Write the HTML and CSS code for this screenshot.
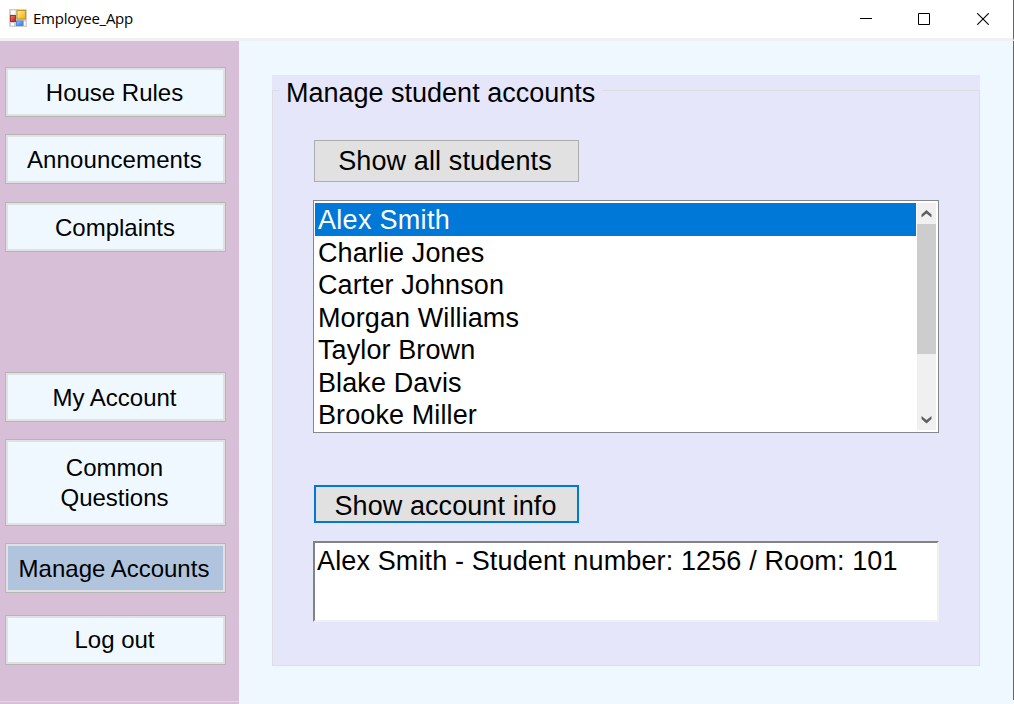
FILE: index.html
```html
<!DOCTYPE html>
<html lang="en">
<head>
<meta charset="utf-8">
<title>Employee_App</title>
<link rel="stylesheet" href="styles.css">
</head>
<body>
<div class="window">
  <header class="titlebar">
    <svg class="app-icon" width="18" height="18" viewBox="0 0 18 18">
      <defs>
        <linearGradient id="gold" x1="0" y1="0" x2="1" y2="1"><stop offset="0" stop-color="#fff0a0"/><stop offset="1" stop-color="#f0ae00"/></linearGradient>
        <linearGradient id="red" x1="0" y1="0" x2="1" y2="1"><stop offset="0" stop-color="#e88878"/><stop offset="1" stop-color="#b01c18"/></linearGradient>
        <linearGradient id="blue" x1="0" y1="0" x2="1" y2="1"><stop offset="0" stop-color="#9cc4ff"/><stop offset="1" stop-color="#2f6fe0"/></linearGradient>
      </defs>
      <rect width="18" height="18" rx="1" fill="#cfcfcf"/>
      <path d="M2 1.500h4.500v4H2zM2 14h3v2.500H2zM14.500 12.500h2v4h-2z" fill="#fff"/>
      <rect x="1.500" y="6.500" width="5" height="6" fill="url(#red)" stroke="#b52a22"/>
      <rect x="8" y="1.500" width="8.500" height="8.500" fill="url(#gold)" stroke="#c99512"/>
      <rect x="7.500" y="12" width="6.500" height="4.500" fill="url(#blue)" stroke="#4d86e0"/>
    </svg>
    <span class="title">Employee_App</span>
    <div class="controls">
      <svg width="12" height="12" viewBox="0 0 12 12"><path d="M0 5.500h12" stroke="#000"/></svg>
      <svg width="12" height="12" viewBox="0 0 12 12"><path d="M.5.5h11v11H.5z" fill="none" stroke="#000"/></svg>
      <svg class="close" width="12" height="12" viewBox="0 0 12 12"><path d="M.2.2l11.600 11.600M11.800.2L.2 11.800" stroke="#000" stroke-width="1.100"/></svg>
    </div>
  </header>
  <div class="body">
    <nav class="sidebar">
      <button class="nav">House Rules</button>
      <button class="nav announcements">Announcements</button>
      <button class="nav complaints">Complaints</button>
      <button class="nav account">My Account</button>
      <button class="nav tall">Common<br>Questions</button>
      <button class="nav active">Manage Accounts</button>
      <button class="nav logout">Log out</button>
      <div class="sidebar-edge"></div>
    </nav>
    <main class="content">
      <div class="panel">
        <fieldset class="group">
          <legend class="legend">Manage student accounts</legend>
          <button class="action show-all">Show all students</button>
          <div class="listbox">
            <ul class="items">
              <li class="selected">Alex Smith</li>
              <li>Charlie Jones</li>
              <li>Carter Johnson</li>
              <li>Morgan Williams</li>
              <li>Taylor Brown</li>
              <li>Blake Davis</li>
              <li>Brooke Miller</li>
            </ul>
            <div class="scrollbar">
              <svg width="19" height="21" viewBox="0 0 19 21"><path d="M4.500 14.500v-3L9.500 7l5 4.500v3L9.500 10.500z" fill="#606060"/></svg>
              <div class="thumb"></div>
              <svg class="down" width="19" height="21" viewBox="0 0 19 21"><path d="M4.500 7v3L9.500 14.500l5-4.500V7L9.500 11z" fill="#606060"/></svg>
            </div>
          </div>
          <button class="action focused">Show account info</button>
          <div class="info">Alex Smith - Student number: 1256 / Room: 101</div>
        </fieldset>
      </div>
    </main>
  </div>
</div>
</body>
</html>
```
FILE: styles.css
```css
* { box-sizing: border-box; }
body { margin: 0; font-family: "Liberation Sans", Arial, sans-serif; color: #000; }
button { font-family: inherit; color: #000; padding: 0; border-radius: 0; }
.window { width: 1014px; height: 704px; overflow: hidden; background: #f0f8ff; display: flex; flex-direction: column; }
.titlebar { height: 41px; flex: none; display: flex; align-items: center; background: #fff; border-bottom: 3px solid #f0f0f0; border-right: 1px solid #666; padding: 0 24px 0 9px; }
.app-icon { margin-top: -2px; }
.title { font-family: "Open Sans", "Noto Sans", sans-serif; font-size: 15px; margin: -2px 0 0 6px; line-height: 20px; letter-spacing: -0.25px; }
.controls { margin-left: auto; display: flex; gap: 46px; padding-right: 1px; }
.controls svg { display: block; }
.controls .close { margin-left: 1px; margin-right: -1px; }
.body { flex: 1; display: flex; }
.sidebar { width: 239px; flex: none; background: #d8bfd8; padding: 26px 0 0 5px; display: flex; flex-direction: column; }
.nav { width: 221px; height: 50px; flex: none; margin-bottom: 17.400px; border: 1px solid #b5b5b5; background: #f0f8ff; box-shadow: inset 0 0 0 2px #e1e1e1; font-size: 24px; line-height: 30px; padding: 1px 2px 0 0; }
.announcements { letter-spacing: 0.12px; }
.complaints { padding: 2px 1px 0 0; }
.account { margin-top: 102.400px; padding-top: 2px; }
.tall { height: 87px; }
.active { background: #b0c4de; padding-right: 3px; }
.logout { margin-top: 4px; }
.sidebar-edge { height: 1px; margin: auto 0 2px -5px; background: #e6d4e8; }
.content { flex: 1; height: 659px; padding: 34px 0 0 33px; border-right: 1px solid #666; }
.panel { width: 708px; height: 591px; background: #e6e6fa; }
.group { margin: 0; height: 591px; padding: 0 0 0 40px; border: 1px solid #dedee2; min-width: 0; }
.legend { font-size: 27px; height: 31px; line-height: 36px; padding: 0 7px; margin-left: -34px; }
.action { display: block; width: 265px; height: 42px; margin-left: 1px; border: 1px solid #adadad; background: #e1e1e1; font-size: 27px; line-height: 36px; }
.show-all { margin-top: 34px; padding: 0 3px 0 0; letter-spacing: 0.12px; }
.listbox { width: 626px; height: 233px; margin-top: 18px; border: 1px solid #828790; background: #fff; display: flex; padding: 2px 2px 2px 1px; }
.items { list-style: none; margin: 0; padding: 0; flex: 1; font-size: 27px; line-height: 34px; }
.items li { height: 32.500px; padding-left: 3px; letter-spacing: 0.1px; }
.items .selected { background: #0078d7; color: #fff; letter-spacing: 0.3px; }
.scrollbar { width: 19px; margin: 0 0 0 1px; background: #f0f0f0; display: flex; flex-direction: column; }
.scrollbar svg { display: block; }
.thumb { height: 130px; background: #cdcdcd; }
.down { margin-top: auto; }
.focused { height: 38px; margin-top: 52px; border: 2px solid #0078d7; padding: 1px 2px 0 0; letter-spacing: 0.08px; }
.info { width: 626px; height: 81px; margin-top: 18px; background: #fff; border: 2px solid; border-color: #828282 #f0f0f0 #f0f0f0 #828282; font-size: 27px; line-height: 31px; padding: 3px 0 0 2px; white-space: nowrap; letter-spacing: 0.13px; }
```
